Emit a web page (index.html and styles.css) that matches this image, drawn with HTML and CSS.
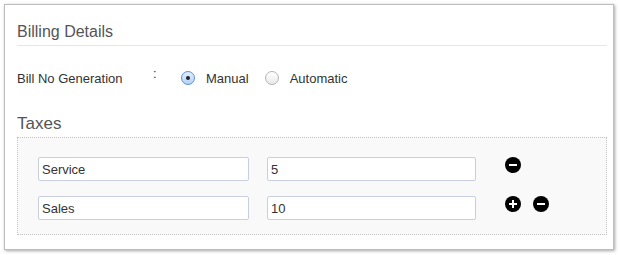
FILE: index.html
```html
<!DOCTYPE html>
<html lang="en">
<head>
	<meta charset="utf-8">
	<title>Billing Details</title>
	<link rel="stylesheet" href="styles.css">
</head>
<body>
	<div class="card">
		<h2 class="section-title">Billing Details</h2>
		<div class="field-row">
			<span class="field-label">Bill No Generation</span>
			<span class="field-colon">:</span>
			<label class="radio-option"><span class="radio checked"></span>Manual</label>
			<label class="radio-option"><span class="radio"></span>Automatic</label>
		</div>
		<h3 class="sub-title">Taxes</h3>
		<div class="tax-box">
			<div class="tax-row">
				<input class="tax-name" value="Service">
				<input class="tax-rate" value="5">
				<div class="tax-actions">
					<span class="round-btn minus"></span>
				</div>
			</div>
			<div class="tax-row">
				<input class="tax-name" value="Sales">
				<input class="tax-rate" value="10">
				<div class="tax-actions">
					<span class="round-btn plus"></span>
					<span class="round-btn minus"></span>
				</div>
			</div>
		</div>
	</div>
</body>
</html>
```

FILE: styles.css
```css
body {
	margin: 0;
	background: #fff;
	font-family: "Liberation Sans", Arial, sans-serif;
	color: #333;
}
.card {
	margin: 4px;
	width: 610px;
	height: 246px;
	box-sizing: border-box;
	border: 1px solid #bdbdbd;
	box-shadow: 1px 1px 3px rgba(0, 0, 0, 0.35);
	padding: 17px 6px 0 12px;
}
.section-title {
	margin: 0;
	font-size: 16px;
	font-weight: normal;
	line-height: 20px;
	color: #555;
	padding-bottom: 3px;
	border-bottom: 1px solid #e6e6e6;
}
.field-row {
	display: flex;
	align-items: center;
	margin-top: 22px;
	height: 20px;
	font-size: 13px;
}
.field-label {
	width: 136px;
}
.field-colon {
	width: 28px;
	position: relative;
	top: -5px;
}
.radio-option {
	display: flex;
	align-items: center;
	margin-right: 16px;
}
.radio {
	width: 12px;
	height: 12px;
	border-radius: 50%;
	border: 1px solid #b5b5b5;
	background: linear-gradient(#fff, #e9e9e9);
	margin-right: 11px;
	display: flex;
	align-items: center;
	justify-content: center;
}
.radio.checked {
	border-color: #5d8fd6;
	background: linear-gradient(#e3effd, #b5d2f5);
}
.radio.checked:after {
	content: "";
	width: 4px;
	height: 4px;
	border-radius: 50%;
	background: #222;
}
.sub-title {
	margin: 26px 0 3px;
	font-size: 17px;
	font-weight: normal;
	line-height: 20px;
	color: #555;
}
.tax-box {
	border: 1px dotted #c4c4c4;
	background: #f9f9f9;
	padding: 19px 0 14px 20px;
}
.tax-row {
	display: flex;
	align-items: center;
}
.tax-row + .tax-row {
	margin-top: 15px;
}
.tax-row input {
	height: 24px;
	box-sizing: border-box;
	border: 1px solid #c8cfe0;
	border-radius: 2px;
	background: #fff;
	font-family: inherit;
	font-size: 13px;
	color: #333;
	padding: 0 3px;
}
.tax-name {
	width: 211px;
	margin-right: 18px;
}
.tax-rate {
	width: 209px;
}
.tax-actions {
	display: flex;
	gap: 12px;
	margin-left: 29px;
	margin-top: -9px;
}
.round-btn {
	width: 16px;
	height: 16px;
	border-radius: 50%;
	background: #000;
	position: relative;
}
.round-btn:before,
.plus:after {
	content: "";
	position: absolute;
	left: 4px;
	top: 7px;
	width: 8px;
	height: 2px;
	background: #fff;
}
.plus:after {
	left: 7px;
	top: 4px;
	width: 2px;
	height: 8px;
}
```
